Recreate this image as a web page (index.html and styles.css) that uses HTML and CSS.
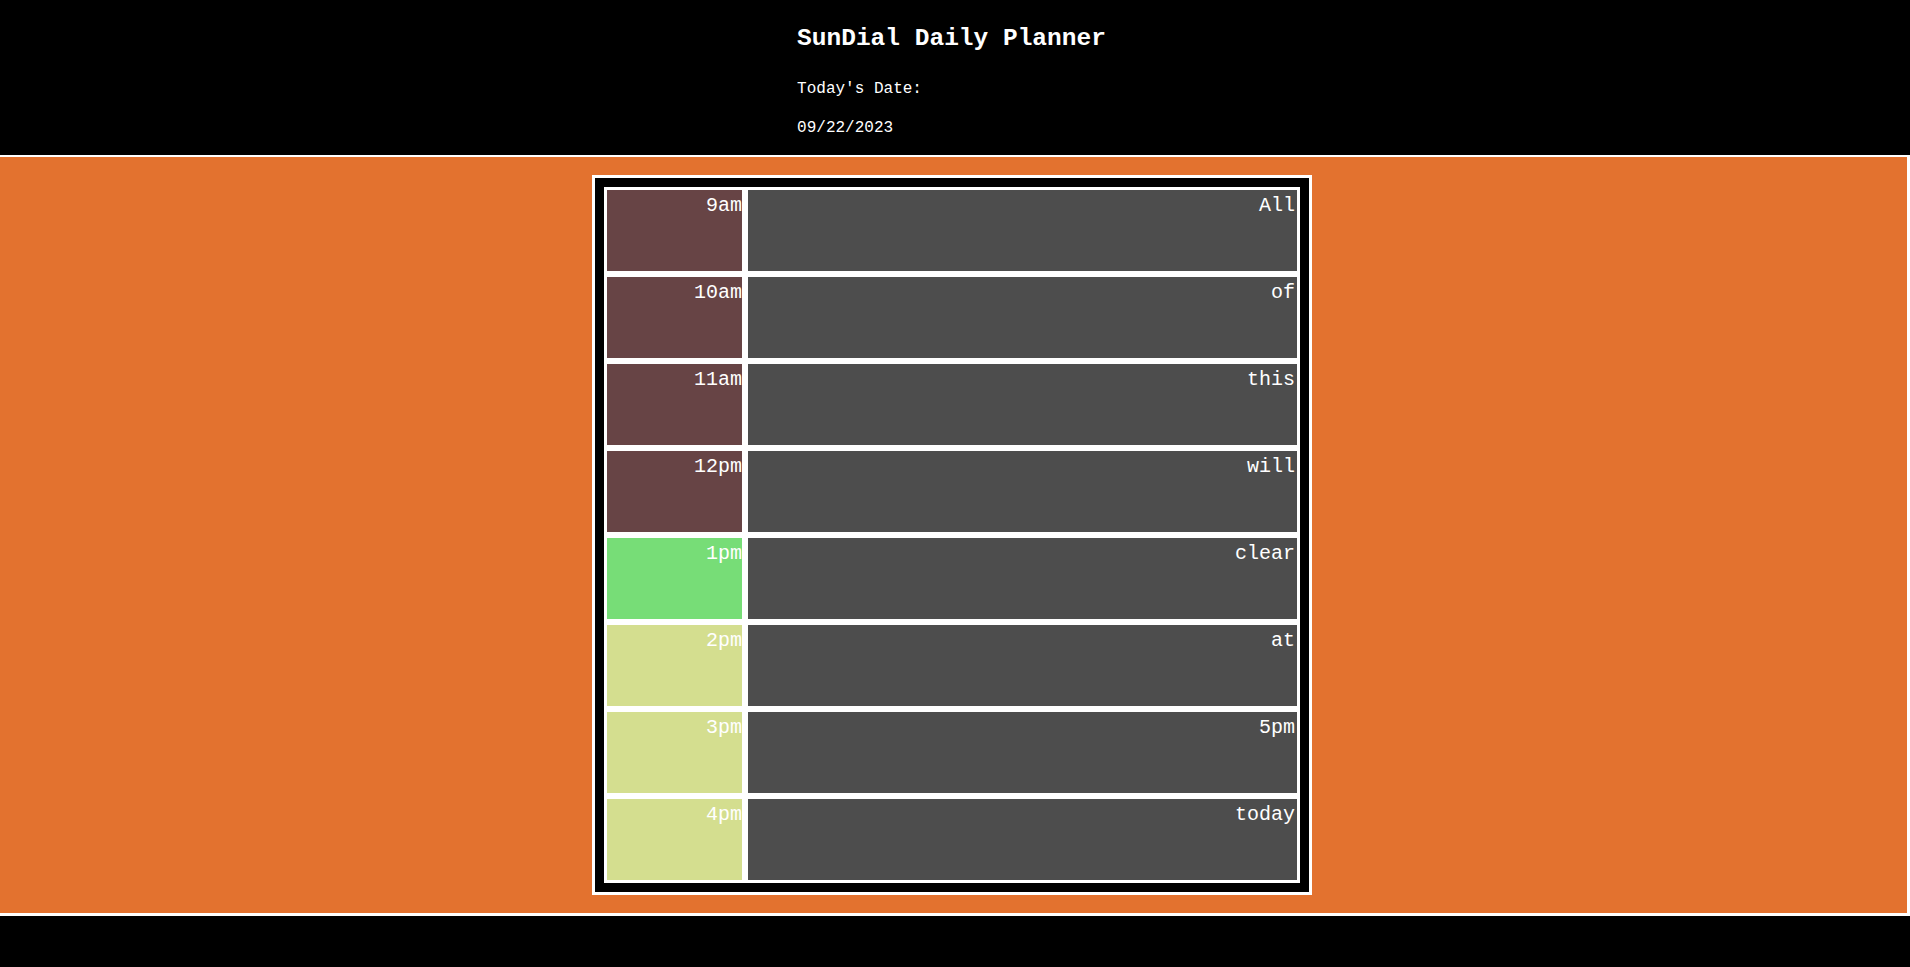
FILE: index.html
```html
<!DOCTYPE html>
<html lang="en">
<head>
<meta charset="utf-8">
<title>SunDial Daily Planner</title>
<link rel="stylesheet" href="styles.css">
</head>
<body>
<header class="header">
  <div class="header-inner">
    <h1 class="title">SunDial Daily Planner</h1>
    <p class="label">Today's Date:</p>
    <p class="date">09/22/2023</p>
  </div>
</header>
<main class="main">
  <div class="planner">
    <div class="row"><div class="hour past">9am</div><textarea class="task">All</textarea></div>
    <div class="row"><div class="hour past">10am</div><textarea class="task">of</textarea></div>
    <div class="row"><div class="hour past">11am</div><textarea class="task">this</textarea></div>
    <div class="row"><div class="hour past">12pm</div><textarea class="task">will</textarea></div>
    <div class="row"><div class="hour present">1pm</div><textarea class="task">clear</textarea></div>
    <div class="row"><div class="hour future">2pm</div><textarea class="task">at</textarea></div>
    <div class="row"><div class="hour future">3pm</div><textarea class="task">5pm</textarea></div>
    <div class="row"><div class="hour future">4pm</div><textarea class="task">today</textarea></div>
  </div>
</main>
</body>
</html>
```
FILE: styles.css
```css
html {
  background: #000;
}
body {
  margin: 0;
  background: #000;
  color: #fff;
  font-family: "Liberation Mono", "DejaVu Sans Mono", monospace;
}
.header {
  display: flex;
  justify-content: center;
  padding: 25px 7px 18px 0;
  height: 155px;
  box-sizing: border-box;
}
.header-inner {
  text-align: left;
}
.title {
  margin: 0 0 27px;
  font-size: 24.5px;
  line-height: 28px;
  font-weight: bold;
}
.label {
  margin: 0 0 21px;
  font-size: 16px;
  line-height: 18px;
}
.date {
  margin: 0;
  font-size: 16px;
  line-height: 18px;
}
.main {
  background: #e3722f;
  border-top: 2px solid #fff;
  border-right: 3px solid #fff;
  border-bottom: 3px solid #fff;
  padding: 18px 3px 18px 0;
  display: flex;
  justify-content: center;
}
.planner {
  width: 720px;
  box-sizing: border-box;
  border: 3px solid #fff;
  background: #000;
  padding: 9px;
  display: flex;
  flex-direction: column;
}
.row {
  display: flex;
  height: 87px;
}
.hour {
  width: 141px;
  box-sizing: border-box;
  border: 3px solid #fff;
  text-align: right;
  font-size: 20px;
  line-height: 22px;
  padding-top: 5px;
}
.past {
  background: #674445;
}
.present {
  background: #77dd77;
}
.future {
  background: #d4de8f;
}
.task {
  flex: 1;
  box-sizing: border-box;
  height: 87px;
  margin: 0;
  border: 3px solid #fff;
  background: #4d4d4d;
  color: #fff;
  font-family: "Liberation Mono", "DejaVu Sans Mono", monospace;
  font-size: 20px;
  line-height: 22px;
  text-align: right;
  padding: 5px 2px 2px;
  resize: none;
  outline: none;
  overflow: hidden;
}
```
